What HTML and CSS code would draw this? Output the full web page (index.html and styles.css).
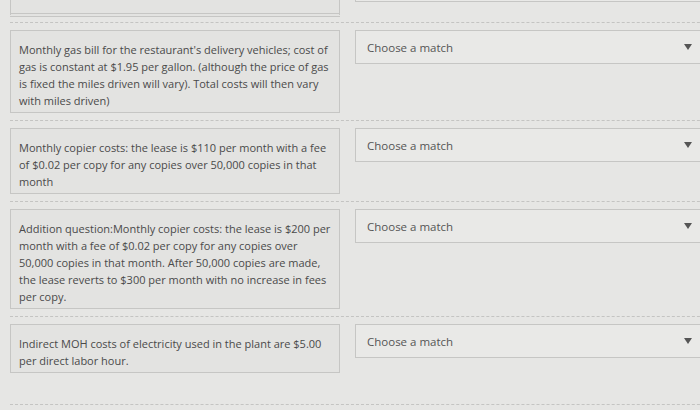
FILE: index.html
```html
<!DOCTYPE html>
<html lang="en">
<head>
  <meta charset="UTF-8">
  <title>Matching question</title>
  <link rel="stylesheet" href="styles.css">
</head>
<body>

  <div class="match-list">
    <div class="row partial">
      <div class="prompt"></div>
      <div class="select"></div>
    </div>

    <div class="row">
      <div class="prompt">Monthly gas bill for the restaurant's delivery vehicles; cost of gas is constant at $1.95 per gallon. (although the price of gas is fixed the miles driven will vary). Total costs will then vary with miles driven)</div>
      <div class="select">
        <span>Choose a match</span>
        <span class="arrow"></span>
      </div>
    </div>

    <div class="row">
      <div class="prompt">Monthly copier costs: the lease is $110 per month with a fee of $0.02 per copy for any copies over 50,000 copies in that month</div>
      <div class="select">
        <span>Choose a match</span>
        <span class="arrow"></span>
      </div>
    </div>

    <div class="row">
      <div class="prompt">Addition question:Monthly copier costs: the lease is $200 per month with a fee of $0.02 per copy for any copies over 50,000 copies in that month. After 50,000 copies are made, the lease reverts to $300 per month with no increase in fees per copy.</div>
      <div class="select">
        <span>Choose a match</span>
        <span class="arrow"></span>
      </div>
    </div>

    <div class="row last">
      <div class="prompt">Indirect MOH costs of electricity used in the plant are $5.00 per direct labor hour.</div>
      <div class="select">
        <span>Choose a match</span>
        <span class="arrow"></span>
      </div>
    </div>
  </div>

</body>
</html>
```

FILE: styles.css
```css
body {
  margin: 0;
  background-color: #e6e6e4;
  font-family: "Open Sans", Arial, sans-serif;
  color: #4a4a4a;
  overflow: hidden;
}
.match-list {
  padding-left: 10px;
  width: 720px;
}
.row {
  display: grid;
  grid-template-columns: 330px 1fr;
  column-gap: 15px;
  align-items: start;
  padding: 7px 0;
  border-bottom: 1px dashed #c4c4c2;
}
.row.partial {
  margin-top: -18px;
  padding-top: 0;
  padding-bottom: 5px;
}
.row.partial .prompt {
  height: 30px;
  padding: 0;
  border-bottom-width: 4px;
  border-bottom-style: double;
}
.row.partial .select {
  height: 20px;
  border-top: none;
}
.row.last {
  padding-bottom: 31px;
}
.prompt {
  background: #e3e3e1;
  border: 1px solid #c6c6c4;
  padding: 10px 8px 3px;
  font-size: 11px;
  line-height: 17px;
}
.select {
  display: flex;
  align-items: center;
  justify-content: space-between;
  height: 34px;
  box-sizing: border-box;
  padding: 0 37px 0 11px;
  background: #e9e9e7;
  border: 1px solid #c6c6c4;
  font-size: 11.5px;
  color: #555;
}
.arrow {
  width: 0;
  height: 0;
  border-left: 4px solid transparent;
  border-right: 4px solid transparent;
  border-top: 6px solid #555;
}
```
